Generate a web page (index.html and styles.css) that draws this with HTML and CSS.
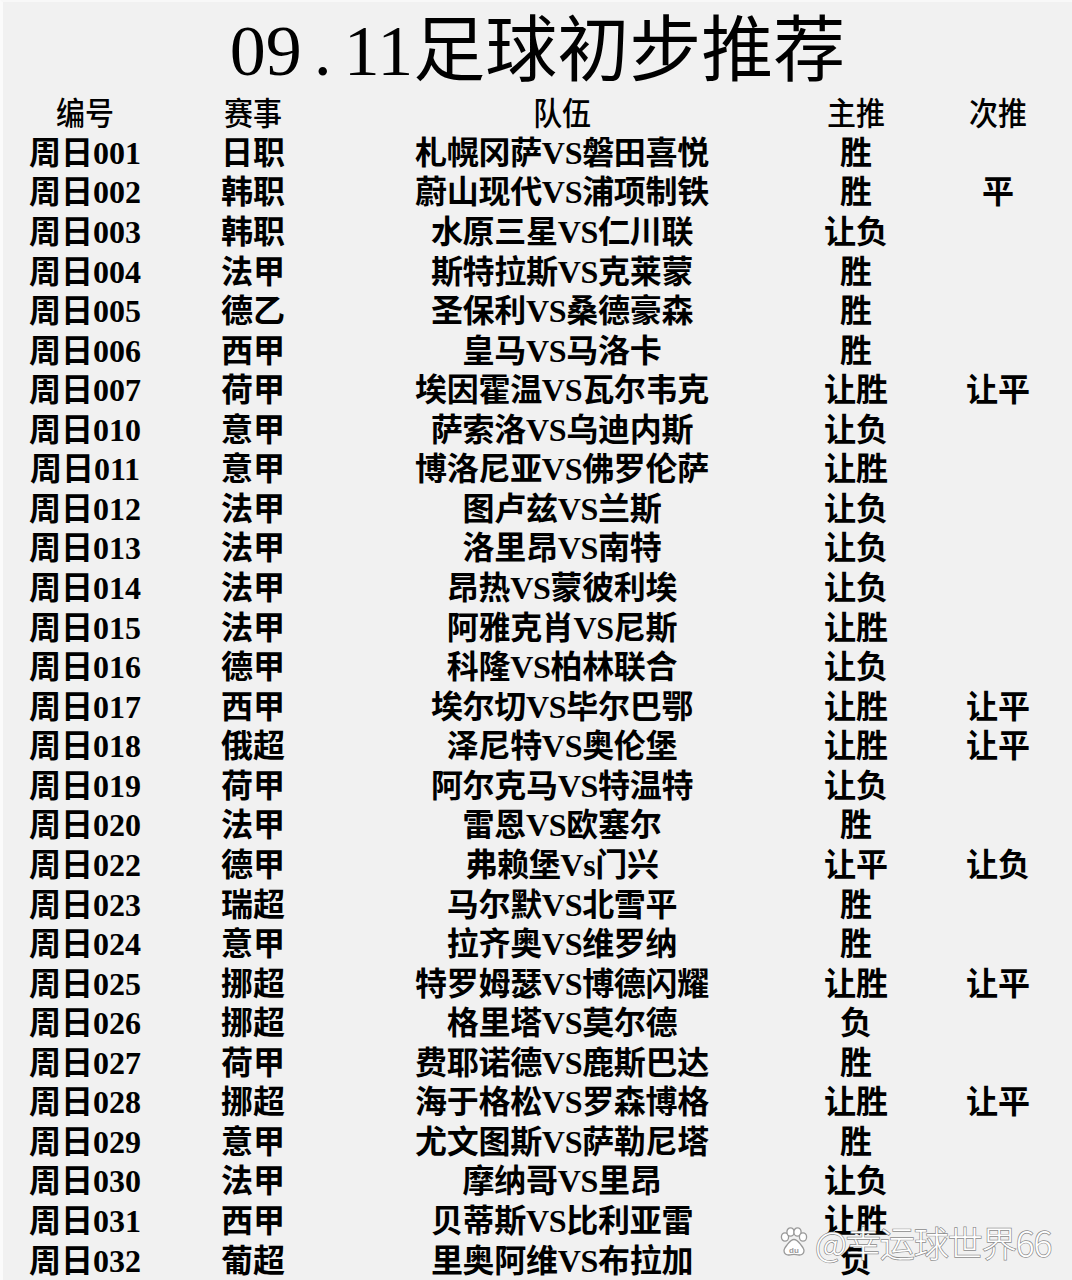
FILE: index.html
```html
<!DOCTYPE html>
<html lang="zh-CN">
<head>
<meta charset="utf-8">
<title>09.11足球初步推荐</title>
<link rel="stylesheet" href="styles.css">
</head>
<body>
<div class="page">
  <h1 class="title">09<span class="dot">.</span>11足球初步推荐</h1>
  <div class="table">
    <div class="row head"><div>编号</div><div>赛事</div><div>队伍</div><div>主推</div><div>次推</div></div>
    <div class="row"><div>周日001</div><div>日职</div><div>札幌冈萨VS磐田喜悦</div><div>胜</div><div></div></div>
    <div class="row"><div>周日002</div><div>韩职</div><div>蔚山现代VS浦项制铁</div><div>胜</div><div>平</div></div>
    <div class="row"><div>周日003</div><div>韩职</div><div>水原三星VS仁川联</div><div>让负</div><div></div></div>
    <div class="row"><div>周日004</div><div>法甲</div><div>斯特拉斯VS克莱蒙</div><div>胜</div><div></div></div>
    <div class="row"><div>周日005</div><div>德乙</div><div>圣保利VS桑德豪森</div><div>胜</div><div></div></div>
    <div class="row"><div>周日006</div><div>西甲</div><div>皇马VS马洛卡</div><div>胜</div><div></div></div>
    <div class="row"><div>周日007</div><div>荷甲</div><div>埃因霍温VS瓦尔韦克</div><div>让胜</div><div>让平</div></div>
    <div class="row"><div>周日010</div><div>意甲</div><div>萨索洛VS乌迪内斯</div><div>让负</div><div></div></div>
    <div class="row"><div>周日011</div><div>意甲</div><div>博洛尼亚VS佛罗伦萨</div><div>让胜</div><div></div></div>
    <div class="row"><div>周日012</div><div>法甲</div><div>图卢兹VS兰斯</div><div>让负</div><div></div></div>
    <div class="row"><div>周日013</div><div>法甲</div><div>洛里昂VS南特</div><div>让负</div><div></div></div>
    <div class="row"><div>周日014</div><div>法甲</div><div>昂热VS蒙彼利埃</div><div>让负</div><div></div></div>
    <div class="row"><div>周日015</div><div>法甲</div><div>阿雅克肖VS尼斯</div><div>让胜</div><div></div></div>
    <div class="row"><div>周日016</div><div>德甲</div><div>科隆VS柏林联合</div><div>让负</div><div></div></div>
    <div class="row"><div>周日017</div><div>西甲</div><div>埃尔切VS毕尔巴鄂</div><div>让胜</div><div>让平</div></div>
    <div class="row"><div>周日018</div><div>俄超</div><div>泽尼特VS奥伦堡</div><div>让胜</div><div>让平</div></div>
    <div class="row"><div>周日019</div><div>荷甲</div><div>阿尔克马VS特温特</div><div>让负</div><div></div></div>
    <div class="row"><div>周日020</div><div>法甲</div><div>雷恩VS欧塞尔</div><div>胜</div><div></div></div>
    <div class="row"><div>周日022</div><div>德甲</div><div>弗赖堡Vs门兴</div><div>让平</div><div>让负</div></div>
    <div class="row"><div>周日023</div><div>瑞超</div><div>马尔默VS北雪平</div><div>胜</div><div></div></div>
    <div class="row"><div>周日024</div><div>意甲</div><div>拉齐奥VS维罗纳</div><div>胜</div><div></div></div>
    <div class="row"><div>周日025</div><div>挪超</div><div>特罗姆瑟VS博德闪耀</div><div>让胜</div><div>让平</div></div>
    <div class="row"><div>周日026</div><div>挪超</div><div>格里塔VS莫尔德</div><div>负</div><div></div></div>
    <div class="row"><div>周日027</div><div>荷甲</div><div>费耶诺德VS鹿斯巴达</div><div>胜</div><div></div></div>
    <div class="row"><div>周日028</div><div>挪超</div><div>海于格松VS罗森博格</div><div>让胜</div><div>让平</div></div>
    <div class="row"><div>周日029</div><div>意甲</div><div>尤文图斯VS萨勒尼塔</div><div>胜</div><div></div></div>
    <div class="row"><div>周日030</div><div>法甲</div><div>摩纳哥VS里昂</div><div>让负</div><div></div></div>
    <div class="row"><div>周日031</div><div>西甲</div><div>贝蒂斯VS比利亚雷</div><div>让胜</div><div></div></div>
    <div class="row"><div>周日032</div><div>葡超</div><div>里奥阿维VS布拉加</div><div>负</div><div></div></div>
  </div>
  <div class="watermark">
    <svg class="paw" viewBox="0 0 30 30" width="30" height="30">
      <g fill="#fff" stroke="#999" stroke-width="1.3">
        <ellipse cx="6" cy="10" rx="3.6" ry="4.2"/>
        <ellipse cx="11.5" cy="5" rx="3.6" ry="4.2"/>
        <ellipse cx="18.5" cy="5" rx="3.6" ry="4.2"/>
        <ellipse cx="24" cy="10" rx="3.6" ry="4.2"/>
        <path d="M15 12.5c-3 0-5 3-7 5.5-2 2.4-3 3.8-3 5.8 0 2.8 2.2 4.4 5 4.2 2-.1 3.4-.7 5-.7s3 .6 5 .7c2.8.2 5-1.4 5-4.2 0-2-1-3.4-3-5.8-2-2.5-4-5.5-7-5.5z"/>
      </g>
      <text x="15" y="25.5" text-anchor="middle" class="du">du</text>
    </svg>
    <span class="wm-text">@幸运球世界66</span>
  </div>
</div>
</body>
</html>
```
FILE: styles.css
```css
html, body {
  margin: 0;
  padding: 0;
}
body {
  background: #f1f1f1;
  color: #000;
  font-family: "Liberation Serif", "Noto Sans CJK SC", serif;
}
.page {
  position: relative;
  width: 1072px;
  height: 1280px;
  overflow: hidden;
  border-left: 3px solid #fbfbfb;
  border-top: 2px solid #f8f8f8;
  box-sizing: border-box;
}
.title {
  margin: 0;
  height: 91.5px;
  padding-top: 6px;
  box-sizing: border-box;
  display: flex;
  align-items: center;
  justify-content: center;
  font-family: "Liberation Serif", "Noto Sans CJK SC", serif;
  font-size: 72px;
  font-weight: 400;
  line-height: 1;
  white-space: nowrap;
}
.dot {
  display: inline-block;
  width: 42px;
  text-align: center;
}
.table {
  display: grid;
  grid-auto-rows: 39.57px;
  margin-left: -3px;
}
.row {
  display: grid;
  grid-template-columns: 170px 166px 452px 136px 148px;
  align-items: center;
  justify-items: center;
  font-size: 32px;
  font-weight: 700;
  line-height: 1;
  white-space: nowrap;
}
.row > div {
  text-align: center;
}
.row > div:nth-child(3) {
  letter-spacing: -0.3px;
}
.head {
  font-family: "Noto Sans CJK SC", sans-serif;
  font-size: 29px;
  font-weight: 500;
}
.head > div {
  transform: translateY(-2px) scaleY(1.08);
}
.watermark {
  position: absolute;
  left: 776px;
  top: 1222px;
  display: flex;
  align-items: center;
  gap: 6px;
}
.paw {
  display: block;
}
.du {
  font-family: "Liberation Sans", sans-serif;
  font-size: 8px;
  font-weight: 700;
  fill: #999;
}
.wm-text {
  font-family: "Noto Sans CJK SC", sans-serif;
  font-size: 35px;
  font-weight: 300;
  line-height: 1;
  color: #fff;
  -webkit-text-stroke: 1.4px #8c8c8c;
  paint-order: stroke fill;
  letter-spacing: -1px;
}
```
